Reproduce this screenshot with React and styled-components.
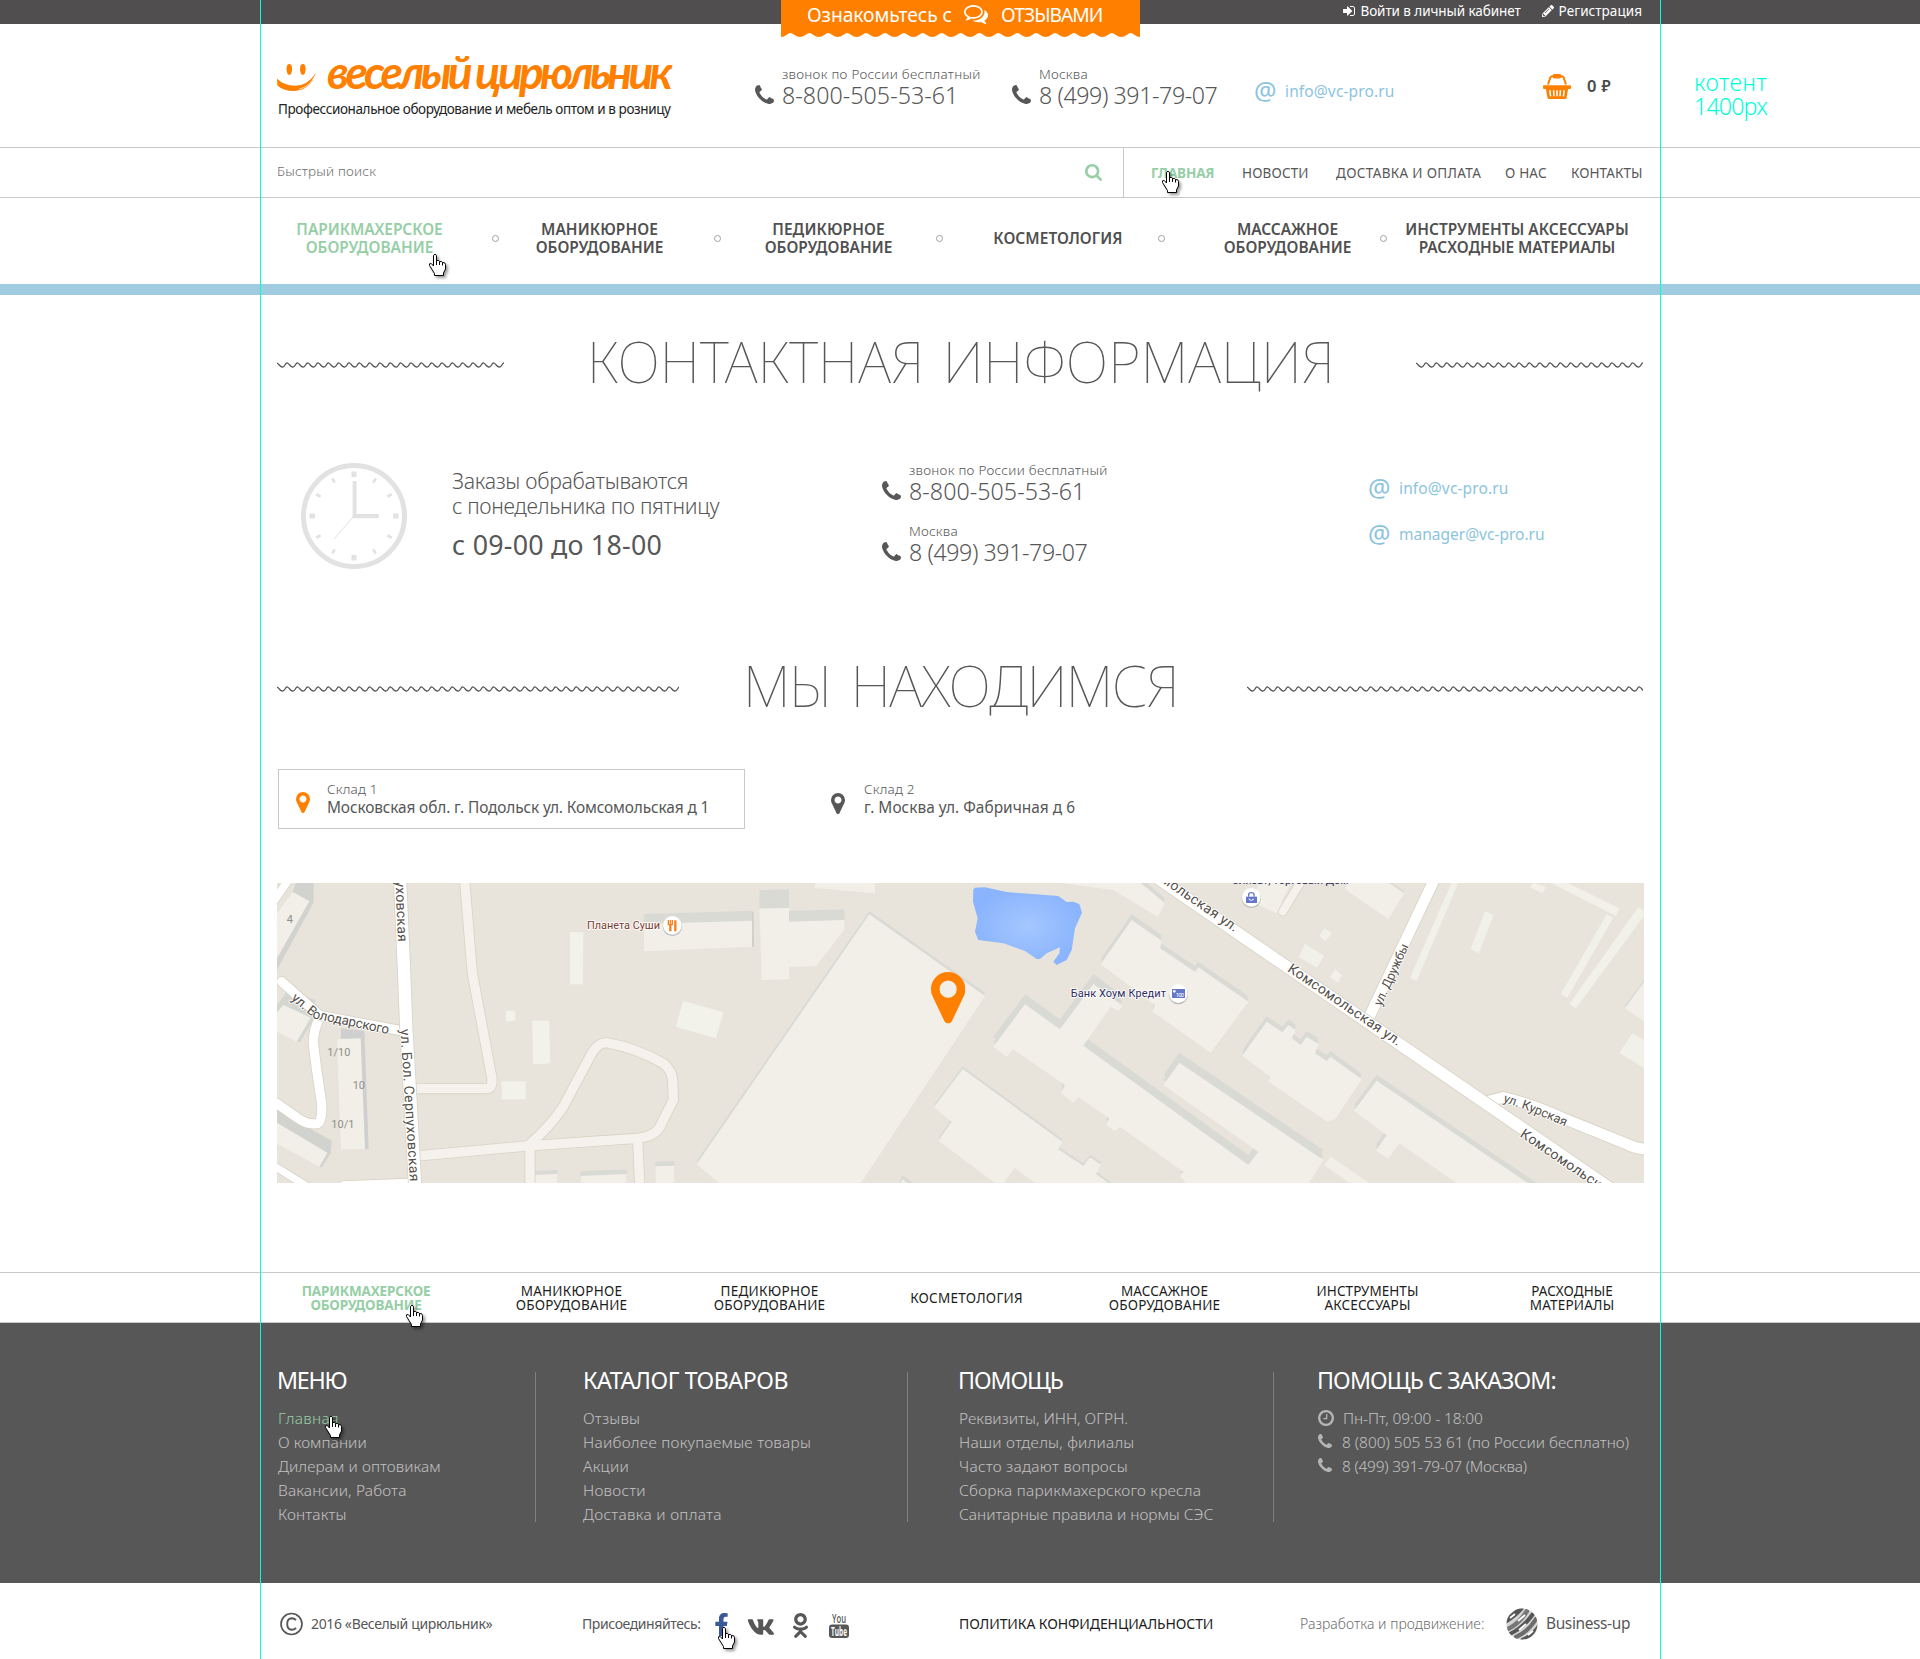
import React from "react";
import styled, { createGlobalStyle, css } from "styled-components";
import { FaPencilAlt, FaFacebookF, FaVk, FaOdnoklassniki } from "react-icons/fa";

const color = {
  bar: "#504e4f",
  dark: "#575757",
  orange: "#ff8000",
  green: "#96cea6",
  blue: "#8cc4de",
  band: "#9fcce0",
  line: "#c9c9c9",
  guide: "#00ffd5",
};

const GlobalStyle = createGlobalStyle`
  *, *::before, *::after { box-sizing: border-box; }
  body {
    margin: 0;
    background: #fff;
    color: ${color.dark};
    font-family: "Noto Sans", "Open Sans", sans-serif;
  }
  a { color: inherit; text-decoration: none; }
  ul { list-style: none; margin: 0; padding: 0; }
  svg { display: block; }
`;

const tracking = css`
  letter-spacing: ${(p) => p.$ls || 0}px;
  white-space: nowrap;
`;

const Page = styled.div`
  position: relative;
  width: 1920px;
  height: 1659px;
  overflow: hidden;
`;

const Container = styled.div`
  width: 1366px;
  margin: 0 auto;
`;

/* ---------- layout guides and cursors laid over the page ---------- */

const Guide = styled.div`
  position: absolute;
  top: 0;
  bottom: 0;
  left: ${(p) => p.$x}px;
  width: 1px;
  background: ${color.guide};
  z-index: 3;
`;

const GuideNote = styled.div`
  position: absolute;
  left: 1694px;
  top: 70px;
  width: 73px;
  color: ${color.guide};
  font-size: 23.2px;
  font-weight: 300;
  line-height: 24px;
`;

const NoteLine = styled.div`
  ${tracking}
`;

const CursorSvg = styled.svg`
  position: absolute;
  left: ${(p) => p.$x}px;
  top: ${(p) => p.$y}px;
  z-index: 4;
  overflow: visible;
  filter: drop-shadow(2px 2px 1.5px rgba(0, 0, 0, 0.4));
`;

function Cursor({ x, y }) {
  return (
    <CursorSvg $x={x} $y={y} width="17" height="22" viewBox="0 0 17 22">
      <path
        d="M4.5 12V1.5Q4.7.5 6 .5T7.5 1.5V6.5Q10.3 5.8 10.5 7.6Q13.3 7 13.5 8.6Q16.3 8 16.5 10.5V15L14.5 19V21.5H5.5V19.5L.5 11.5V9.8Q2 8.2 4.5 12Z"
        fill="#fff"
        stroke="#000"
      />
      <path d="M7.5 6V11M10.5 7.5V11M13.5 8.5V11.5" fill="none" stroke="#000" />
    </CursorSvg>
  );
}

/* ---------- icons ---------- */

const glyphs = {
  phone: {
    box: "192 128 1408 1408",
    d: "M1600 1240q0 27-10 70.5t-21 68.5q-21 50-122 106-94 51-186 51-27 0-53-3.5t-57.5-12.5-47-14.5-55.5-20.5-49-18q-98-35-175-83-127-79-264-216t-216-264q-48-77-83-175-3-9-18-49t-20.5-55.5-14.5-47-12.5-57.5-3.5-53q0-92 51-186 56-101 106-122 25-11 68.5-21t70.5-10q14 0 21 3 18 6 53 76 11 19 30 54t35 63.5 31 53.5q3 4 17.5 25t21.5 35.5 7 28.5q0 20-28.5 50t-62 55-62 53-28.5 46q0 9 5 22.5t8.5 20.5 14 24 11.5 19q76 137 174 235t235 174q2 1 19 11.5t24 14 20.5 8.5 22.5 5q18 0 46-28.5t53-62 55-62 50-28.5q14 0 28.5 7t35.5 21.5 25 17.5q25 15 53.5 31t63.5 35 54 30q70 35 76 53 3 7 3 21z",
  },
  marker: {
    box: "384 128 1024 1536",
    d: "M1152 640q0-106-75-181t-181-75-181 75-75 181 75 181 181 75 181-75 75-181zm256 0q0 109-33 179l-364 774q-16 33-47.5 52t-67.5 19-67.5-19-46.5-52l-365-774q-33-70-33-179 0-212 150-362t362-150 362 150 150 362z",
  },
  search: {
    box: "64 128 1664 1664",
    d: "M1216 832q0-185-131.5-316.5t-316.5-131.5-316.5 131.5-131.5 316.5 131.5 316.5 316.5 131.5 316.5-131.5 131.5-316.5zm512 832q0 52-38 90t-90 38q-54 0-90-38l-343-342q-179 124-399 124-143 0-273.5-55.5t-225-150-150-225-55.5-273.5 55.5-273.5 150-225 225-150 273.5-55.5 273.5 55.5 225 150 150 225 55.5 273.5q0 220-124 399l343 343q37 37 37 90z",
  },
  clock: {
    box: "128 128 1536 1536",
    d: "M1024 544v448q0 14-9 23t-23 9h-320q-14 0-23-9t-9-23v-64q0-14 9-23t23-9h224v-352q0-14 9-23t23-9h64q14 0 23 9t9 23zm416 352q0-148-73-273t-198-198-273-73-273 73-198 198-73 273 73 273 198 198 273 73 273-73 198-198 73-273zm224 0q0 209-103 385.5t-279.5 279.5-385.5 103-385.5-103-279.5-279.5-103-385.5 103-385.5 279.5-279.5 385.5-103 385.5 103 279.5 279.5 103 385.5z",
  },
  signIn: {
    box: "128 256 1536 1280",
    d: "M1312 896q0 26-19 45l-544 544q-19 19-45 19t-45-19-19-45v-288h-448q-26 0-45-19t-19-45v-384q0-26 19-45t45-19h448v-288q0-26 19-45t45-19 45 19l544 544q19 19 19 45zm352-352v704q0 119-84.5 203.5t-203.5 84.5h-320q-13 0-22.5-9.5t-9.5-22.5q0-4-1-20t-.5-26.5 3-23.5 10-19.5 20.5-6.5h320q66 0 113-47t47-113v-704q0-66-47-113t-113-47h-312l-11.5-1-11.5-3-8-5.5-7-9-2-13.5q0-4-1-20t-.5-26.5 3-23.5 10-19.5 20.5-6.5h320q119 0 203.5 84.5t84.5 203.5z",
  },
  comments: {
    box: "0 256 1792 1408",
    d: "M704 384q-153 0-286 52t-211.5 141-78.5 191q0 82 53 158t149 132l97 56-35 84q34-20 62-39l44-31 53 10q78 14 153 14 153 0 286-52t211.5-141 78.5-191-78.5-191-211.5-141-286-52zm0-128q191 0 353.5 68.5t256.5 186.5 94 257-94 257-256.5 186.5-353.5 68.5q-86 0-176-16-124 88-278 128-36 9-86 16h-3q-11 0-20.5-8t-11.5-21q-1-3-1-6.5t.5-6.5 2-6l2.5-5 3.5-5.5 4-5 4.5-5 4-4.5q5-6 23-25t26-29.5 22.5-29 25-38.5 20.5-44q-124-72-195-177t-71-224q0-139 94-257t256.5-186.5 353.5-68.5zm822 1169q10 24 20.5 44t25 38.5 22.5 29 26 29.5 23 25q1 1 4 4.5t4.5 5 4 5 3.5 5.5l2.5 5 2 6 .5 6.5-1 6.5q-3 14-13 22t-22 7q-50-7-86-16-154-40-278-128-90 16-176 16-271 0-472-132 58 4 88 4 161 0 309-45t264-129q125-92 192-212t67-254q0-77-23-152 129 71 204 178t75 230q0 120-71 224.5t-195 176.5z",
  },
};

const IconSvg = styled.svg`
  flex: none;
  fill: currentColor;
`;

function Icon({ name, w, h = w }) {
  const g = glyphs[name];
  return (
    <IconSvg width={w} height={h} viewBox={g.box}>
      <path d={g.d} />
    </IconSvg>
  );
}

function Basket() {
  return (
    <svg width="28" height="25" viewBox="0 0 28 25" fill={color.orange}>
      <path d="M5 10.5L7.3 3.6Q7.8 2.2 9.5 2.2H18.5Q20.2 2.2 20.7 3.6L23 10.5" fill="none" stroke={color.orange} strokeWidth="2" />
      <rect x="9.6" y="0" width="8.8" height="4.4" rx="1.6" />
      <rect x="0" y="11.3" width="28" height="3.6" rx="1" />
      <path d="M2.8 14.5H25.2L23.6 23.4Q23.3 25 21.8 25H6.2Q4.7 25 4.4 23.4Z" />
      <path d="M6.8 16.2L7.6 22.3M10.6 16.2L11 22.3M14 16.2V22.3M17.4 16.2L17 22.3M21.2 16.2L20.4 22.3" stroke="#fff" strokeWidth="1.5" />
    </svg>
  );
}

function Smile() {
  return (
    <svg width="40" height="31" viewBox="0 0 40 31" fill={color.orange}>
      <ellipse cx="12.3" cy="8.3" rx="2.8" ry="5.6" />
      <ellipse cx="25.8" cy="8.3" rx="2.8" ry="5.6" />
      <path d="M0 17.8Q7 24.5 18 24.8Q30 25 39 12Q33 29.5 17 30Q6 29.8 .4 24.4Z" />
      <path d="M22 28.3Q33 25.5 38 14.5" fill="none" stroke="#fff" strokeWidth=".7" />
    </svg>
  );
}

function Dial() {
  const minor = [30, 60, 120, 150, 210, 240, 300, 330];
  const major = [0, 90, 180, 270];
  return (
    <svg width="106" height="106" viewBox="-53 -53 106 106" fill="#e2e2e2">
      <circle r="50.5" fill="none" stroke="#e2e2e2" strokeWidth="5" />
      {major.map((a) => (
        <rect key={a} x="-2.5" y="-44.5" width="5" height="5.5" transform={`rotate(${a})`} />
      ))}
      {minor.map((a) => (
        <rect key={a} x="-1.3" y="-43.5" width="2.6" height="5" transform={`rotate(${a})`} />
      ))}
      <rect x="-1.3" y="-35" width="3.8" height="37" />
      <rect x="-1.3" y="-2" width="26" height="4.2" />
      <path d="M0 0L-20 23" stroke="#e2e2e2" strokeWidth="1" />
    </svg>
  );
}

function Globe() {
  return (
    <svg width="32" height="32" viewBox="0 0 32 32">
      <defs>
        <clipPath id="ball"><circle cx="16" cy="16" r="15.5" /></clipPath>
      </defs>
      <g clipPath="url(#ball)">
        <rect width="32" height="32" fill="#d4d4d4" />
        <g fill="none" stroke="#565656" strokeLinecap="round">
          <path d="M-1 13Q8 8 15 0" strokeWidth="5.5" />
          <path d="M2 21Q13 16 21 3" strokeWidth="4.4" stroke="#777" />
          <path d="M4 26Q17 20 27 6" strokeWidth="4" />
          <path d="M10 29Q22 24 30 11" strokeWidth="4.2" stroke="#6c6c6c" />
          <path d="M17 32Q26 29 33 19" strokeWidth="5" />
        </g>
        <path d="M4 10L9 6M12 13L19 7M13 22L20 16M22 27L27 23" stroke="#fff" strokeWidth="1.8" />
      </g>
    </svg>
  );
}

/* ---------- top bar ---------- */

const TopBar = styled.div`
  height: 24px;
  background: ${color.bar};
`;

const TopLinks = styled(Container)`
  display: flex;
  justify-content: flex-end;
  gap: 21px;
  padding: 1px 1px 0 0;
  color: #fff;
  font-size: 13.5px;
  line-height: 20px;
`;

const TopLink = styled.a`
  display: flex;
  align-items: center;
  gap: 5px;
  ${tracking}
`;

const Banner = styled.div`
  position: absolute;
  left: 781px;
  top: 0;
  width: 359px;
  z-index: 2;
`;

const BannerBody = styled.div`
  height: 33px;
  padding: 0 0 0 26px;
  background: ${color.orange};
  color: #fff;
  display: flex;
  align-items: flex-start;
  font-size: 19.3px;
  line-height: 29px;
`;

const BannerText = styled.span`
  width: ${(p) => p.$w}px;
  ${tracking}
`;

const BannerIcon = styled.span`
  width: 37px;
  padding-top: 5px;
`;

function Scallops() {
  return (
    <svg width="359" height="5" viewBox="0 0 359 5" fill={color.orange}>
      <path d={`M0 0V4${"q3 0 5.500-2t4-2 4 2 5.400 2".repeat(19)}V0Z`} />
    </svg>
  );
}

/* ---------- header ---------- */

const Header = styled(Container)`
  display: grid;
  grid-template-columns: 478px 257px 243px 288px 1fr;
  height: 123px;
`;

const Brand = styled.a`
  padding-top: 25px;
`;

const BrandRow = styled.div`
  display: flex;
  gap: 10px;
  height: 51px;
`;

const BrandFace = styled.div`
  padding-top: 12px;
`;

const Wordmark = styled.div`
  color: ${color.orange};
  font-family: Lato, "Open Sans", sans-serif;
  font-size: 46px;
  font-style: italic;
  font-weight: 700;
  line-height: 46px;
  ${tracking}
`;

const Tagline = styled.div`
  padding-left: 1px;
  color: #222;
  font-size: 13.5px;
  line-height: 18px;
  ${tracking}
`;

const PhoneBlock = styled.div`
  display: flex;
  gap: 8px;
  padding-top: ${(p) => p.$top || 0}px;
`;

const PhoneIcon = styled.div`
  padding-top: 19px;
`;

const PhoneLabel = styled.div`
  font-size: 13.5px;
  font-weight: 300;
  line-height: 16px;
  ${tracking}
`;

const PhoneNumber = styled.div`
  padding-top: 1px;
  font-size: 23.2px;
  font-weight: 300;
  line-height: 24px;
  ${tracking}
`;

function Phone({ label, labelLs, number, numberLs, top }) {
  return (
    <PhoneBlock $top={top}>
      <PhoneIcon><Icon name="phone" w={19} /></PhoneIcon>
      <div>
        <PhoneLabel $ls={labelLs}>{label}</PhoneLabel>
        <PhoneNumber $ls={numberLs}>{number}</PhoneNumber>
      </div>
    </PhoneBlock>
  );
}

const MailLink = styled.a`
  display: flex;
  gap: 8px;
  height: 20px;
  margin-top: ${(p) => p.$top || 0}px;
  color: ${color.blue};
  font-size: 15.5px;
  line-height: 20px;
  ${tracking}
`;

const MailSign = styled.span`
  width: 22px;
  margin-left: -1px;
  margin-right: 1px;
  font-size: 25px;
  line-height: 18px;
  letter-spacing: 0;
`;

const Cart = styled.a`
  display: flex;
  gap: 16px;
  padding-top: 50px;
  color: #4a4a4a;
  font-weight: 600;
  line-height: 24px;
`;

const CartSum = styled.span`
  display: flex;
  gap: 5px;
  font-size: 16.5px;
`;

const Ruble = styled.span`
  font-size: 15.5px;
`;

/* ---------- search and site navigation ---------- */

const SearchRow = styled.div`
  border-top: 1px solid ${color.line};
  border-bottom: 1px solid ${color.line};
`;

const SearchInner = styled(Container)`
  display: flex;
  height: 49px;
`;

const SearchBox = styled.div`
  display: flex;
  justify-content: space-between;
  width: 847px;
  padding: 14px 21px 0 0;
  border-right: 1px solid ${color.line};
  color: #6e6e6e;
  font-size: 13.5px;
  font-weight: 300;
  line-height: 18px;
  ${tracking}
`;

const SearchButton = styled.span`
  padding-top: 2px;
  color: ${color.green};
`;

const SiteNav = styled.nav`
  display: grid;
  grid-template-columns: 91px 94px 169px 66px auto;
  padding: 16px 0 0 27px;
  font-size: 13.5px;
  line-height: 19px;
`;

const NavLink = styled.a`
  color: ${(p) => (p.$active ? color.green : color.dark)};
  font-weight: ${(p) => (p.$active ? 700 : 400)};
  ${tracking}
`;

/* ---------- category navigation ---------- */

const Categories = styled(Container)`
  display: flex;
  align-items: center;
  height: 86px;
  padding-bottom: 6px;
`;

const Category = styled.a`
  width: ${(p) => p.$w || 215}px;
  padding-left: ${(p) => Math.max(p.$shift || 0, 0)}px;
  padding-right: ${(p) => Math.max(-(p.$shift || 0), 0)}px;
  color: ${(p) => (p.$active ? color.green : "#505050")};
  font-size: 15.45px;
  font-weight: 600;
  line-height: 18px;
  text-align: center;
  white-space: nowrap;
`;

const Words = styled.span`
  display: block;
  ${tracking}
`;

const Dot = styled.i`
  width: 7px;
  height: 7px;
  margin-top: 1px;
  border: 1px solid #a0a0a0;
  border-radius: 50%;
`;

const Band = styled.div`
  height: 11px;
  background: ${color.band};
`;

/* ---------- sections ---------- */

const HeadingRow = styled(Container)`
  display: flex;
  align-items: center;
  justify-content: space-between;
  height: 96px;
  padding-top: 36px;
`;

const Heading = styled.h1`
  margin: 0;
  padding-left: ${(p) => Math.max(-(p.$pad || 0), 0)}px;
  padding-right: ${(p) => Math.max(p.$pad || 0, 0)}px;
  font-size: 56.7px;
  font-weight: 100;
  line-height: 60px;
  word-spacing: ${(p) => p.$ws || 0}px;
  ${tracking}
`;

const WaveSvg = styled.svg`
  margin-top: 8px;
`;

function Wave({ w }) {
  const n = Math.ceil(w / 10.33);
  return (
    <WaveSvg width={w} height="6" viewBox={`0 0 ${w} 6`}>
      <path
        d={`M0 1${"q1 .3 2.3 2t2.900 2 2.800-2 2.330-2".repeat(n)}`}
        fill="none"
        stroke={color.dark}
        strokeWidth="1.3"
      />
    </WaveSvg>
  );
}

const Contacts = styled(Container)`
  display: grid;
  grid-template-columns: 175px 430px 487px 1fr;
  height: 228px;
  padding-top: 70px;
`;

const DialBox = styled.div`
  padding: 2px 0 0 24px;
`;

const Schedule = styled.div`
  padding-top: 7px;
  font-size: 21.25px;
  font-weight: 300;
  line-height: 25px;
`;

const Line = styled.div`
  ${tracking}
`;

const Hours = styled.div`
  margin-top: 10px;
  font-size: 26.8px;
  font-weight: 400;
  line-height: 34px;
  ${tracking}
`;

const PhoneList = styled.div`
  display: flex;
  flex-direction: column;
  gap: 20px;
  padding-top: 1px;
`;

const MailList = styled.div`
  display: flex;
  flex-direction: column;
  gap: 26px;
  padding-top: 17px;
`;

const Stores = styled(Container)`
  display: flex;
  gap: 69px;
  padding: 54px 0 54px 1px;
`;

const Store = styled.a`
  display: flex;
  gap: 17px;
  width: 467px;
  height: 60px;
  padding: 11px 0 0 17px;
  border: 1px solid ${(p) => (p.$active ? color.line : "transparent")};
`;

const StorePin = styled.span`
  margin-left: ${(p) => (p.$active ? 0 : -1)}px;
  margin-right: ${(p) => (p.$active ? 0 : 2)}px;
  padding-top: ${(p) => (p.$active ? 11 : 12)}px;
  color: ${(p) => (p.$active ? color.orange : color.dark)};
`;

const StoreName = styled.div`
  font-size: 13.5px;
  font-weight: 300;
  line-height: 16px;
  ${tracking}
`;

const StoreAddress = styled.div`
  font-size: 15.45px;
  line-height: 21px;
  ${tracking}
`;

/* ---------- map ---------- */

const MapFrame = styled(Container)`
  height: 300px;
  margin-bottom: 89px;
`;

const MapSvg = styled.svg`
  font-family: Roboto, "Noto Sans", sans-serif;
`;

const ROOF = "#f1efe8";
const SHADE = "#dadad5";

function Roof({ p, lift = 0, fill = ROOF }) {
  return (
    <>
      {lift > 0 && <polygon points={p} fill={SHADE} transform={`translate(0 ${-lift})`} />}
      {lift > 0 && <polygon points={p} fill={SHADE} transform={`translate(0 ${-lift / 2})`} />}
      <polygon points={p} fill={fill} />
    </>
  );
}

function Road({ d, w, minor }) {
  return (
    <g fill="none" strokeLinejoin="round" strokeLinecap="round">
      <path d={d} stroke="#d9d3c5" strokeWidth={w + 5} />
      <path d={d} stroke={minor ? "#f5f2ed" : "#fff"} strokeWidth={w} />
    </g>
  );
}

function StreetName({ id, d, len, size = 42, children }) {
  return (
    <>
      <path id={id} d={d} fill="none" />
      <text fontSize={size} fill="#55504b" stroke="#fff" strokeWidth="5" paintOrder="stroke">
        <textPath href={`#${id}`} textLength={len}>{children}</textPath>
      </text>
    </>
  );
}

function StreetMap() {
  return (
    <MapSvg width="1367" height="300" viewBox="0 0 1367 300">
      <defs>
        <radialGradient id="pond">
          <stop offset="0" stopColor="#a5c7ff" />
          <stop offset="1" stopColor="#8ab4fd" />
        </radialGradient>
      </defs>
      <rect width="1367" height="300" fill="#e8e4dc" />

      {/* west quarter */}
      <g transform="translate(-7 -13) scale(.33333)">
        <polygon points="68,65 80,30 131,30 131,97 21,300 21,130" fill="#d2d2ce" />
        <polygon points="68,65 118,94 21,265 21,130" fill={ROOF} />
        <polygon points="10,420 55,360 135,390 132,448 90,517 80,515" fill="#d6d6d1" />
        <polygon points="40,405 122,443 80,515 10,480 10,440" fill={ROOF} />
        <polygon points="213,475 283,482 296,836 285,838 213,600" fill="#cfcfcf" />
        <polygon points="201,507 272,505 285,836 213,839" fill={ROOF} />
        <polygon points="10,715 185,812 182,850 155,893 10,760" fill="#d2d2cf" />
        <polygon points="10,752 172,848 148,890 10,815" fill={ROOF} />
        <Roof p="785,915 862,912 862,950 785,950" lift={12} />
        <Roof p="932,918 1070,912 1070,950 932,950" lift={14} />
        <Roof p="1156,889 1213,887 1213,950 1156,950" lift={14} />
        <Roof p="900,187 940,187 938,343 900,343" fill="#f3f2ea" />
        <Roof p="708,422 736,422 736,450 722,454 708,454" fill="#f3f2ea" />
        <Roof p="787,452 837,452 841,578 828,582 789,582" fill="#f3f2ea" />
        <Roof p="695,634 767,634 767,688 695,688" fill="#f3f2ea" />
        <Roof p="1240,393 1360,427 1338,505 1217,470" fill="#f3f2ea" />
        <Road d="M583 20L607 310L665 620Q670 655 650 656H430" w={28} minor />
        <Road d="M440 858L770 828L1100 805Q1150 800 1167 775L1210 690L1208 630Q1205 600 1180 580Q1100 535 1010 518Q985 518 965 550L880 710Q840 770 780 822V960M1103 812L1110 960" w={28} minor />
        <Road d="M-10 125L65 15" w={24} />
        <Road d="M148 445Q130 480 130 520L140 600L155 700Q158 758 140 761Q110 765 80 742L5 690" w={28} />
        <Road d="M0 880L120 955M220 945L415 937" w={22} />
        <Road d="M35 335L150 437L400 483" w={28} />
        <Road d="M390 20L402 300L409 480L419 650L436 960" w={37} />
        <StreetName id="s1" d="M376 32L384 217" len={184}>уховская</StreetName>
        <StreetName id="s2" d="M391 478L402 650L420 936" len={458}>ул. Бол. Серпуховская</StreetName>
        <StreetName id="s3" d="M62 388L132 445L362 494" len={318} size={40}>ул. Володарского</StreetName>
        <g fontSize="33" fill="#8e8e8a">
          <text x="50" y="158">4</text>
          <text x="172" y="557">1/10</text>
          <text x="248" y="656">10</text>
          <text x="184" y="773">10/1</text>
        </g>
      </g>

      {/* central quarter */}
      <g transform="translate(453 -13) scale(.33333)">
        <Roof p="255,20 435,20 435,70 255,54" />
        <Roof p="-258,162 66,152 66,230 -258,244" lift={30} />
        <polygon points="66,125 71,125 72,230 66,230" fill="#cfcfcd" />
        <Roof p="175,155 343,150 343,180 258,288 178,291" lift={32} />
        <Roof p="88,116 177,114 177,328 95,330" lift={56} />
        <Roof p="418,133 765,378 385,950 -20,950 -100,882" lift={10} />
        <path
          d="M735 53L765 52L830 66L985 78L1010 96L1030 95L1048 102L1056 128L1035 175L1025 240L1010 270L980 285L970 275L988 250L990 232L950 250L930 267H920L885 243L820 220L745 210L735 185L743 145L729 95L730 58Z"
          fill="url(#pond)"
        />
        <Roof p="985,38 1210,20 1305,100 1283,140 1150,60" lift={16} />
        <Roof p="1112,283 1205,150 1295,212 1290,235 1395,305 1405,292 1555,395 1442,548 1268,425 1275,405" lift={17} />
        <Roof p="790,530 885,403 990,478 1090,342 1178,408 1165,423 1142,410 1060,527 1555,885 1585,845 1300,645 1348,578 1780,870 1730,950 1380,950 1350,920 1360,905 1170,770 1155,783 1128,765 1138,745 1045,682 1030,698 993,670 1005,645 850,538 830,560" lift={30} />
        <Roof p="612,712 698,597 997,815 985,838 1060,888 1080,862 1113,884 1098,912 1150,950 930,950 853,893 815,950 810,950 625,812 665,755" lift={8} />
        <Roof p="505,960 517,927 560,960" lift={12} />
        <text x="-429" y="177" fontSize="33" textLength="219" fill="#7b3a2e" stroke="#fff" strokeWidth="5" paintOrder="stroke">Планета Суши</text>
        <circle cx="-173" cy="169" r="29" fill="#b9b9b5" />
        <circle cx="-173" cy="166" r="28" fill="#fff" />
        <g stroke="#f58220" strokeWidth="4" fill="none">
          <path d="M-185 150V163M-179 150V163M-173 150V163M-187 164H-171" />
          <path d="M-179 164V184M-164 151V184" strokeWidth="7" />
        </g>
        <text x="1022" y="381" fontSize="33" textLength="286" fill="#2c2c5e" stroke="#fff" strokeWidth="5" paintOrder="stroke">Банк Хоум Кредит</text>
        <circle cx="1345" cy="374" r="29" fill="#b9b9b5" />
        <circle cx="1345" cy="371" r="28" fill="#fff" />
        <rect x="1326" y="357" width="39" height="27" fill="#6677c8" />
        <circle cx="1333" cy="364" r="4" fill="#fff" />
        <text x="1337" y="381" fontSize="17" textLength="25" fill="#fff">100</text>
      </g>

      {/* east quarter */}
      <g transform="translate(903 -13) scale(.33333)">
        <Roof p="495,58 505,20 585,10 673,70 625,147" lift={6} />
        <Roof p="245,20 340,20 290,130 215,95" />
        <g fill="#f1f0e9">
          <polygon points="435,175 455,190 435,215 417,197" />
          <polygon points="375,222 433,258 410,293 356,260" />
          <polygon points="465,298 487,316 473,338 450,322" />
          <polygon points="823,20 843,20 710,333 690,323" />
          <polygon points="915,124 941,135 897,250 872,238" />
          <polygon points="1075,20 1125,20 1318,115 1308,138" />
          <polygon points="1280,133 1300,143 1162,383 1142,373" />
          <polygon points="1375,112 1400,126 1188,415 1168,402" />
          <polygon points="1060,38 1097,52 1088,70 1050,52" />
          <polygon points="1358,490 1400,515 1400,600 1318,548" />
        </g>
        <Roof p="1335,415 1400,325 1400,460" lift={8} />
        <Roof p="187,557 260,455 307,487 325,465 347,480 335,505 362,525 380,500 415,522 405,550 440,573 452,560 545,628 465,748 442,755 265,635 270,620" lift={17} />
        <Roof p="522,722 590,632 1075,960 860,960 658,820 625,866 588,842 620,795" lift={18} />
        <Roof p="432,885 452,860 600,960 540,960" />
        <Road d="M308 125L372 20" w={24} minor />
        <Road d="M767 20L568 440" w={32} />
        <Road d="M910 697L970 682Q1050 700 1150 745L1340 822Q1370 838 1410 838" w={32} />
        <Road d="M-110 -5L1310 969" w={35} />
        <StreetName id="s4" d="M-170 -42L171 192" len={404}>Комсомольская ул.</StreetName>
        <StreetName id="s5" d="M320 302L664 536" len={402}>Комсомольская ул.</StreetName>
        <StreetName id="s6" d="M604 410L688 225" len={200} size={38}>ул. Дружбы</StreetName>
        <StreetName id="s7" d="M968 695L1045 722L1162 772" len={202} size={38}>ул. Курская</StreetName>
        <StreetName id="s8" d="M1018 798L1400 1058" len={402}>Комсомольская ул.</StreetName>
        <text x="155" y="43" fontSize="33" textLength="350" fill="#2c2c5e">Элизат, Торговый Дом</text>
        <circle cx="214" cy="85" r="29" fill="#b9b9b5" />
        <circle cx="214" cy="82" r="28" fill="#fff" />
        <path d="M198 80H231V99H198Z" fill="#6677c8" />
        <path d="M206 80V74Q206 68 214 68T222 74V80" fill="none" stroke="#6677c8" strokeWidth="4" />
        <path d="M206 87Q214 96 222 87" fill="none" stroke="#fff" strokeWidth="3" />
      </g>

      <svg x="654" y="89" width="34.3" height="51.5" viewBox={glyphs.marker.box} fill={color.orange}>
        <path d={glyphs.marker.d} />
      </svg>
    </MapSvg>
  );
}

/* ---------- footer ---------- */

const FooterNav = styled.div`
  border-top: 1px solid ${color.line};
  border-bottom: 1px solid ${color.line};
`;

const FooterNavInner = styled(Container)`
  display: flex;
  align-items: center;
  height: 49px;
  padding-left: 25px;
`;

const FooterCategory = styled.a`
  width: ${(p) => p.$w}px;
  margin-right: ${(p) => p.$gap || 0}px;
  color: ${(p) => (p.$active ? color.green : "#1c1c1c")};
  font-size: 13.5px;
  font-weight: ${(p) => (p.$active ? 700 : 400)};
  line-height: 14px;
  display: flex;
  flex-direction: column;
  align-items: center;
`;

const FooterMain = styled.footer`
  height: 260px;
  padding-top: 49px;
  background: ${color.dark};
`;

const FooterGrid = styled(Container)`
  display: grid;
  grid-template-columns: 258px 372px 366px 1fr;
`;

const FooterColumn = styled.div`
  height: 150px;
  padding-left: ${(p) => p.$pad || 0}px;
  border-left: ${(p) => (p.$pad ? "1px solid #7f7f7f" : "0")};
`;

const FooterTitle = styled.h2`
  margin: -6px 0 12px;
  color: #fff;
  font-size: 23.2px;
  font-weight: 400;
  line-height: 28px;
  ${tracking}
`;

const FooterLink = styled.li`
  display: flex;
  gap: ${(p) => p.$gap || 0}px;
  height: 24px;
  padding-left: ${(p) => p.$indent || 0}px;
  color: ${(p) => (p.$active ? color.green : "#c2c2c2")};
  font-size: 15.45px;
  font-weight: 300;
  line-height: 24px;
  ${tracking}
`;

const LinkIcon = styled.span`
  padding-top: 4px;
  color: #b5b5b5;
`;

const Bottom = styled(Container)`
  display: grid;
  grid-template-columns: 305px 377px 341px 1fr;
  padding-top: 30px;
  font-size: 14px;
  line-height: 21px;
`;

const Copyright = styled.div`
  display: flex;
  gap: 8px;
  padding-left: 3px;
  ${tracking}
`;

const CopySvg = styled.svg`
  margin-top: -1px;
`;

const Social = styled.div`
  display: flex;
`;

const SocialLabel = styled.span`
  width: 128px;
  ${tracking}
`;

const SocialIcon = styled.a`
  width: ${(p) => p.$w}px;
  color: ${(p) => p.$color || color.dark};
`;

const Policy = styled.a`
  color: #1c1c1c;
  ${tracking}
`;

const Maker = styled.div`
  display: flex;
  color: #6d6d6d;
  font-weight: 300;
`;

const MakerLabel = styled.span`
  width: 206px;
  ${tracking}
`;

const MakerLogo = styled.span`
  width: 40px;
  height: 20px;
  margin-top: -5px;
`;

const MakerName = styled.span`
  color: ${color.dark};
  font-size: 15.45px;
  font-weight: 400;
  ${tracking}
`;

function YouTube() {
  return (
    <svg width="20" height="26" viewBox="0 0 20 26" fill={color.dark}>
      <text x="3" y="10" fontFamily="Open Sans" fontSize="12" fontWeight="600" textLength="14" lengthAdjust="spacingAndGlyphs">You</text>
      <rect x="0" y="11.5" width="20" height="13.5" rx="3" />
      <text x="2" y="23" fontFamily="Open Sans" fontSize="12" fontWeight="700" textLength="16" lengthAdjust="spacingAndGlyphs" fill="#fff">Tube</text>
    </svg>
  );
}

/* ---------- content ---------- */

const categories = [
  { lines: [["ПАРИКМАХЕРСКОЕ", -0.04], ["ОБОРУДОВАНИЕ", 0.02]], shift: -30, active: true },
  { lines: [["МАНИКЮРНОЕ", 0.1], ["ОБОРУДОВАНИЕ", 0.02]], shift: -14 },
  { lines: [["ПЕДИКЮРНОЕ", 0.1], ["ОБОРУДОВАНИЕ", 0.02]], shift: 0 },
  { lines: [["КОСМЕТОЛОГИЯ", 0.05]], shift: 15 },
  { lines: [["МАССАЖНОЕ", -0.05], ["ОБОРУДОВАНИЕ", 0.02]], shift: 30 },
  { lines: [["ИНСТРУМЕНТЫ АКСЕССУАРЫ", 0.03], ["РАСХОДНЫЕ МАТЕРИАЛЫ", -0.05]], shift: 4, w: 256 },
];

const footerCategories = [
  { lines: [["ПАРИКМАХЕРСКОЕ", -0.16], ["ОБОРУДОВАНИЕ", -0.15]], w: 128, gap: 86, active: true },
  { lines: [["МАНИКЮРНОЕ", 0.27], ["ОБОРУДОВАНИЕ", 0.22]], w: 111, gap: 87 },
  { lines: [["ПЕДИКЮРНОЕ", 0.27], ["ОБОРУДОВАНИЕ", 0.22]], w: 111, gap: 86 },
  { lines: [["КОСМЕТОЛОГИЯ", 0.26]], w: 111, gap: 87 },
  { lines: [["МАССАЖНОЕ", 0.1], ["ОБОРУДОВАНИЕ", 0.22]], w: 111, gap: 97 },
  { lines: [["ИНСТРУМЕНТЫ", 0.05], ["АКСЕССУАРЫ", 0.1]], w: 101, gap: 112 },
  { lines: [["РАСХОДНЫЕ", 0.05], ["МАТЕРИАЛЫ", 0.2]], w: 84 },
];

const footerColumns = [
  {
    title: "МЕНЮ", ls: -1.2, indent: 1,
    links: [["Главная", 0.29], ["О компании", 0.05], ["Дилерам и оптовикам", 0.06], ["Вакансии, Работа", 0.16], ["Контакты", 0.15]],
  },
  {
    title: "КАТАЛОГ ТОВАРОВ", ls: -0.47, pad: 47,
    links: [["Отзывы", 0.2], ["Наиболее покупаемые товары", 0.26], ["Акции", 0.25], ["Новости", 0.25], ["Доставка и оплата", 0.3]],
  },
  {
    title: "ПОМОЩЬ", ls: -1.05, pad: 50, indent: 1,
    links: [["Реквизиты, ИНН, ОГРН.", 0], ["Наши отделы, филиалы", 0.2], ["Часто задают вопросы", 0.26], ["Сборка парикмахерского кресла", 0.2], ["Санитарные правила и нормы СЭС", -0.01]],
  },
];

export default function App() {
  return (
    <Page>
      <GlobalStyle />

      <TopBar>
        <TopLinks>
          <TopLink $ls={-0.08}><Icon name="signIn" w={12} h={10} />Войти в личный кабинет</TopLink>
          <TopLink $ls={0.05}><FaPencilAlt size={12} />Регистрация</TopLink>
        </TopLinks>
      </TopBar>
      <Banner>
        <BannerBody>
          <BannerText $w={157} $ls={-0.08}>Ознакомьтесь с</BannerText>
          <BannerIcon><Icon name="comments" w={24} h={19} /></BannerIcon>
          <BannerText $w={110} $ls={-1}>ОТЗЫВАМИ</BannerText>
        </BannerBody>
        <Scallops />
      </Banner>

      <Header as="header">
        <Brand>
          <BrandRow>
            <BrandFace><Smile /></BrandFace>
            <Wordmark $ls={-3.8}>веселый цирюльник</Wordmark>
          </BrandRow>
          <Tagline $ls={-0.39}>Профессиональное оборудование и мебель оптом и в розницу</Tagline>
        </Brand>
        <Phone top={42} label="звонок по России бесплатный" labelLs={0.29} number="8-800-505-53-61" numberLs={0.06} />
        <Phone top={42} label="Москва" labelLs={0.24} number="8 (499) 391-79-07" numberLs={-0.42} />
        <MailLink $top={57} $ls={0.13}><MailSign>@</MailSign>info@vc-pro.ru</MailLink>
        <Cart><Basket /><CartSum>0 <Ruble>₽</Ruble></CartSum></Cart>
      </Header>

      <SearchRow>
        <SearchInner>
          <SearchBox $ls={0.2}>
            Быстрый поиск
            <SearchButton><Icon name="search" w={17} /></SearchButton>
          </SearchBox>
          <SiteNav>
            <NavLink $active $ls={-0.14}>ГЛАВНАЯ</NavLink>
            <NavLink $ls={0.14}>НОВОСТИ</NavLink>
            <NavLink $ls={0.34}>ДОСТАВКА И ОПЛАТА</NavLink>
            <NavLink $ls={0.18}>О НАС</NavLink>
            <NavLink $ls={0.05}>КОНТАКТЫ</NavLink>
          </SiteNav>
        </SearchInner>
      </SearchRow>

      <Categories as="nav">
        {categories.map((c, i) => (
          <React.Fragment key={i}>
            {i > 0 && <Dot />}
            <Category $shift={c.shift} $w={c.w} $active={c.active}>
              {c.lines.map(([t, ls]) => <Words key={t} $ls={ls}>{t}</Words>)}
            </Category>
          </React.Fragment>
        ))}
      </Categories>
      <Band />

      <HeadingRow>
        <Wave w={227} />
        <Heading $ls={0.13} $ws={3.5} $pad={-2}>КОНТАКТНАЯ ИНФОРМАЦИЯ</Heading>
        <Wave w={227} />
      </HeadingRow>
      <Contacts>
        <DialBox><Dial /></DialBox>
        <Schedule>
          <Line $ls={-0.28}>Заказы обрабатываются</Line>
          <Line $ls={-0.34}>с понедельника по пятницу</Line>
          <Hours $ls={0.24}>с 09-00 до 18-00</Hours>
        </Schedule>
        <PhoneList>
          <Phone label="звонок по России бесплатный" labelLs={0.29} number="8-800-505-53-61" numberLs={0.06} />
          <Phone label="Москва" labelLs={0.24} number="8 (499) 391-79-07" numberLs={-0.42} />
        </PhoneList>
        <MailList>
          <MailLink $ls={0.13}><MailSign>@</MailSign>info@vc-pro.ru</MailLink>
          <MailLink $ls={0}><MailSign>@</MailSign>manager@vc-pro.ru</MailLink>
        </MailList>
      </Contacts>

      <HeadingRow>
        <Wave w={402} />
        <Heading $ls={-1.35} $ws={7} $pad={5}>МЫ НАХОДИМСЯ</Heading>
        <Wave w={396} />
      </HeadingRow>
      <Stores>
        <Store $active>
          <StorePin $active><Icon name="marker" w={14} h={21} /></StorePin>
          <div>
            <StoreName $ls={0.2}>Склад 1</StoreName>
            <StoreAddress $ls={-0.13}>Московская обл. г. Подольск ул. Комсомольская д 1</StoreAddress>
          </div>
        </Store>
        <Store>
          <StorePin><Icon name="marker" w={14} h={21} /></StorePin>
          <div>
            <StoreName $ls={0.2}>Склад 2</StoreName>
            <StoreAddress $ls={0.02}>г. Москва ул. Фабричная д 6</StoreAddress>
          </div>
        </Store>
      </Stores>
      <MapFrame><StreetMap /></MapFrame>

      <FooterNav>
        <FooterNavInner as="nav">
          {footerCategories.map((c, i) => (
            <FooterCategory key={i} $w={c.w} $gap={c.gap} $active={c.active}>
              {c.lines.map(([t, ls]) => <Words key={t} $ls={ls}>{t}</Words>)}
            </FooterCategory>
          ))}
        </FooterNavInner>
      </FooterNav>
      <FooterMain>
        <FooterGrid>
          {footerColumns.map((col, i) => (
            <FooterColumn key={col.title} $pad={col.pad}>
              <FooterTitle $ls={col.ls}>{col.title}</FooterTitle>
              <ul>
                {col.links.map(([t, ls], j) => (
                  <FooterLink key={t} $ls={ls} $indent={col.indent} $active={i === 0 && j === 0}>{t}</FooterLink>
                ))}
              </ul>
            </FooterColumn>
          ))}
          <FooterColumn $pad={43}>
            <FooterTitle $ls={-0.88}>ПОМОЩЬ С ЗАКАЗОМ:</FooterTitle>
            <ul>
              <FooterLink $indent={1} $gap={9} $ls={-0.06}><LinkIcon><Icon name="clock" w={16} /></LinkIcon>Пн-Пт, 09:00 - 18:00</FooterLink>
              <FooterLink $indent={1} $gap={10}><LinkIcon><Icon name="phone" w={14} /></LinkIcon>8 (800) 505 53 61 (по России бесплатно)</FooterLink>
              <FooterLink $indent={1} $gap={10} $ls={-0.21}><LinkIcon><Icon name="phone" w={14} /></LinkIcon>8 (499) 391-79-07 (Москва)</FooterLink>
            </ul>
          </FooterColumn>
        </FooterGrid>
      </FooterMain>

      <Bottom>
        <Copyright $ls={-0.36}>
          <CopySvg width="23" height="24" viewBox="0 0 23 24" fill="none" stroke={color.dark} strokeWidth="1.7">
            <circle cx="11.5" cy="12" r="10.5" />
            <path d="M16 8.2Q14.3 6.3 11.8 6.3Q7.2 6.5 7.2 12T11.8 17.7Q14.3 17.7 16 15.8" strokeWidth="1.9" />
          </CopySvg>
          2016 «Веселый цирюльник»
        </Copyright>
        <Social>
          <SocialLabel $ls={-0.4}>Присоединяйтесь:</SocialLabel>
          <SocialIcon $w={37} $color="#3b5998"><FaFacebookF size={23} /></SocialIcon>
          <SocialIcon $w={41}><FaVk size={28} /></SocialIcon>
          <SocialIcon $w={41}><FaOdnoklassniki size={25} /></SocialIcon>
          <SocialIcon $w={20}><YouTube /></SocialIcon>
        </Social>
        <Policy $ls={-0.11}>ПОЛИТИКА КОНФИДЕНЦИАЛЬНОСТИ</Policy>
        <Maker>
          <MakerLabel $ls={0.04}>Разработка и продвижение:</MakerLabel>
          <MakerLogo><Globe /></MakerLogo>
          <MakerName $ls={-0.36}>Business-up</MakerName>
        </Maker>
      </Bottom>

      <GuideNote>
        <NoteLine $ls={0.4}>котент</NoteLine>
        <NoteLine $ls={-0.85}>1400px</NoteLine>
      </GuideNote>
      <Guide $x={260} />
      <Guide $x={1660} />
      <Cursor x={429} y={254} />
      <Cursor x={1162} y={171} />
      <Cursor x={406} y={1305} />
      <Cursor x={325} y={1416} />
      <Cursor x={718} y={1627} />
    </Page>
  );
}
